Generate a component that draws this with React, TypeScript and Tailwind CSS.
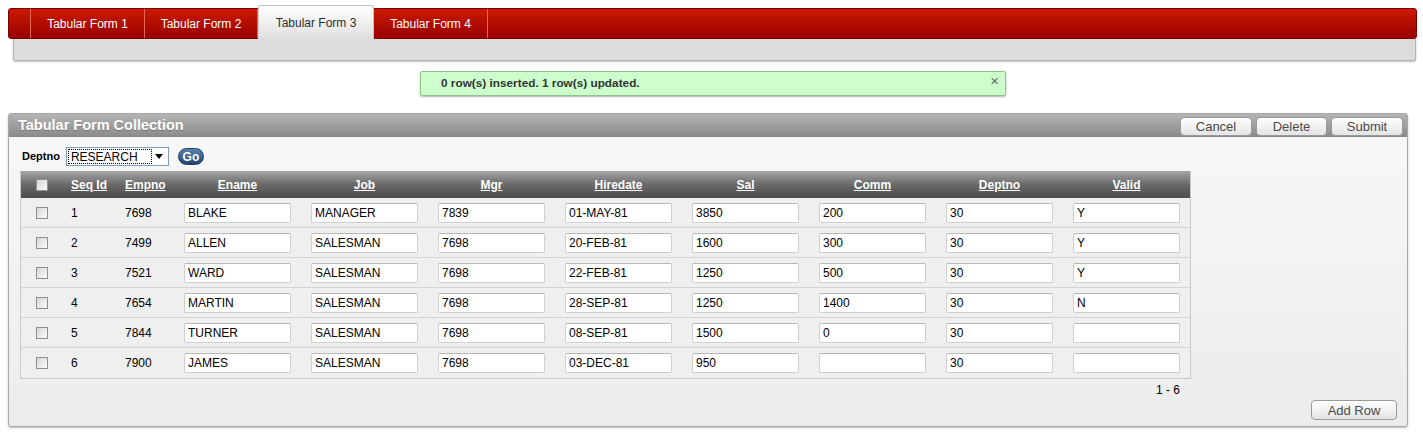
import React from "react";

const rows = [
  { seq: 1, empno: 7698, ename: "BLAKE", job: "MANAGER", mgr: "7839", hire: "01-MAY-81", sal: "3850", comm: "200", dept: "30", valid: "Y" },
  { seq: 2, empno: 7499, ename: "ALLEN", job: "SALESMAN", mgr: "7698", hire: "20-FEB-81", sal: "1600", comm: "300", dept: "30", valid: "Y" },
  { seq: 3, empno: 7521, ename: "WARD", job: "SALESMAN", mgr: "7698", hire: "22-FEB-81", sal: "1250", comm: "500", dept: "30", valid: "Y" },
  { seq: 4, empno: 7654, ename: "MARTIN", job: "SALESMAN", mgr: "7698", hire: "28-SEP-81", sal: "1250", comm: "1400", dept: "30", valid: "N" },
  { seq: 5, empno: 7844, ename: "TURNER", job: "SALESMAN", mgr: "7698", hire: "08-SEP-81", sal: "1500", comm: "0", dept: "30", valid: "" },
  { seq: 6, empno: 7900, ename: "JAMES", job: "SALESMAN", mgr: "7698", hire: "03-DEC-81", sal: "950", comm: "", dept: "30", valid: "" },
];

const tabs = [
  { label: "Tabular Form 1", w: "w-[114px]" },
  { label: "Tabular Form 2", w: "w-[113px]" },
  { label: "Tabular Form 3", w: "w-[116px]", active: true },
  { label: "Tabular Form 4", w: "w-[114px]" },
];

function Check() {
  return (
    <span className="inline-block h-[12px] w-[12px] border border-[#8f8f8f] bg-gradient-to-br from-[#d6d6d6] to-[#fbfbfb] align-middle" />
  );
}

function Btn({ children, className = "" }: { children: React.ReactNode; className?: string }) {
  return (
    <button
      className={
        "h-[19px] rounded-[4px] border border-[#9a9a9a] bg-gradient-to-b from-[#ffffff] to-[#e4e4e4] text-[13px] leading-[17px] text-[#4a4a4a] " +
        className
      }
    >
      {children}
    </button>
  );
}

function Field({ value }: { value: string }) {
  return (
    <div className="ml-[10px] flex h-[20px] w-[107px] items-center rounded-[2px] border border-[#cfcfcf] border-t-[#b8b8b8] bg-white pl-[3px] text-[12px] text-black">
      {value}
    </div>
  );
}

const heads = ["Ename", "Job", "Mgr", "Hiredate", "Sal", "Comm", "Deptno", "Valid"];

export default function App() {
  return (
    <div className="min-h-[441px] bg-white font-['Liberation_Sans',Arial,sans-serif]">
      {/* tabs */}
      <div className="px-[8px] pt-[5px]">
        <div className="flex h-[34px] w-[1409px] items-end">
          <div className="flex h-[31px] w-full rounded-[3px] border border-[#7d0000] bg-gradient-to-b from-[#cc1a00] to-[#990000]">
            <div className="h-full w-[22px] border-r border-[#e36a5a]" />
            {tabs.map((t) =>
              t.active ? (
                <div
                  key={t.label}
                  className={
                    t.w +
                    " -mt-[4px] flex h-[34px] items-center justify-center rounded-t-[3px] border border-b-0 border-[#c4c4c4] bg-gradient-to-b from-[#ffffff] to-[#e0e0e0] text-[12px] text-[#2e2e2e]"
                  }
                >
                  {t.label}
                </div>
              ) : (
                <div
                  key={t.label}
                  className={t.w + " flex h-full items-center justify-center border-r border-[#e36a5a] text-[12px] text-white"}
                >
                  {t.label}
                </div>
              )
            )}
          </div>
        </div>
        <div className="ml-[5px] h-[22px] w-[1403px] rounded-b-[3px] border border-t-0 border-[#b3b3b3] bg-[#dcdcdc] shadow-[0_1px_2px_rgba(0,0,0,0.25)]" />
      </div>

      {/* message */}
      <div className="ml-[420px] mt-[10px] flex h-[25px] w-[586px] items-center justify-between rounded-[2px] border border-[#8fc48f] bg-[#ccffcc] pl-[20px] pr-[6px] shadow-[0_1px_2px_rgba(0,0,0,0.3)]">
        <span className="text-[11.8px] font-bold text-[#333]">0 row(s) inserted. 1 row(s) updated.</span>
        <span className="-mt-[6px] text-[15px] leading-none text-[#666]">×</span>
      </div>

      {/* region */}
      <div className="ml-[8px] mt-[17px] w-[1400px] rounded-[3px] border border-[#a8a8a8] bg-gradient-to-b from-[#f8f8f8] to-[#ececec] shadow-[0_1px_2px_rgba(0,0,0,0.25)]">
        <div className="flex h-[23px] items-center justify-between bg-gradient-to-b from-[#b4b4b4] to-[#8a8a8a] pl-[9px] pr-[4px]">
          <span className="text-[14.5px] font-bold text-white [text-shadow:0_1px_0_rgba(0,0,0,0.25)]">Tabular Form Collection</span>
          <div className="flex gap-[4px] pt-[1px]">
            <Btn className="w-[72px]">Cancel</Btn>
            <Btn className="w-[71px]">Delete</Btn>
            <Btn className="w-[72px]">Submit</Btn>
          </div>
        </div>

        <div className="pl-[11px] pt-[10px]">
          <div className="flex items-center">
            <span className="ml-[2px] text-[11px] font-bold text-black">Deptno</span>
            <div className="ml-[6px] flex h-[19px] w-[103px] items-center justify-between border border-[#7f9db9] bg-white p-[1px]">
              <span className="flex h-full w-[84px] items-center border border-dotted border-black pl-[2px] text-[12px] text-black">RESEARCH</span>
              <svg width="8" height="5" viewBox="0 0 8 5" className="mr-[4px]">
                <path d="M0 0h8L4 5z" fill="#000" />
              </svg>
            </div>
            <div className="ml-[9px] flex h-[17px] w-[26px] items-center justify-center rounded-full border border-[#1e3d5c] bg-gradient-to-b from-[#5b84ad] to-[#1f4670] text-[12px] font-bold text-white">
              Go
            </div>
          </div>

          <div className="mt-[5px] w-[1171px] border border-[#c9c9c9] border-t-0">
            <div className="flex h-[27px] items-center bg-gradient-to-b from-[#a6a6a6] via-[#6a6a6a] to-[#4c4c4c] text-[12px] font-bold text-white underline">
              <div className="flex w-[40px] justify-center pl-[2px]">
                <Check />
              </div>
              <div className="w-[54px] pl-[10px]">Seq Id</div>
              <div className="w-[59px] pl-[10px]">Empno</div>
              {heads.map((h) => (
                <div key={h} className="w-[127px] text-center">
                  {h}
                </div>
              ))}
            </div>
            {rows.map((r, i) => (
              <div
                key={r.seq}
                className={"flex h-[30px] items-center bg-[#efefef] text-[12px] text-black" + (i < rows.length - 1 ? " border-b border-[#d4d4d4]" : "")}
              >
                <div className="flex w-[40px] justify-center pl-[2px]">
                  <Check />
                </div>
                <div className="w-[54px] pl-[10px]">{r.seq}</div>
                <div className="w-[59px] pl-[10px]">{r.empno}</div>
                {[r.ename, r.job, r.mgr, r.hire, r.sal, r.comm, r.dept, r.valid].map((v, j) => (
                  <div key={j} className="w-[127px]">
                    <Field value={v} />
                  </div>
                ))}
              </div>
            ))}
          </div>
          <div className="w-[1160px] pt-[2px] text-right text-[12px] text-black">1 - 6</div>
          <div className="flex justify-end pb-[6px] pr-[10px] pt-[1px]">
            <Btn className="h-[20px] w-[86px]">Add Row</Btn>
          </div>
        </div>
      </div>
    </div>
  );
}
